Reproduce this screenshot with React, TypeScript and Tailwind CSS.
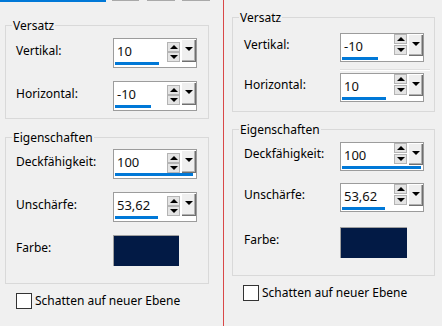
const font = "font-['Noto_Sans',sans-serif]"

interface SpinProps {
  value: string
  bar: number
  tall?: boolean
}

// Windows-style numeric spin box, slider bar runs along the bottom
function Spin({ value, bar, tall = false }: SpinProps) {
  return (
    <div
      className={`flex w-[84px] shrink-0 flex-col border border-[#9c9c9c] bg-white ${tall ? 'h-[30px]' : 'h-[29px]'}`}
    >
      <div className="flex items-start">
        <div className="flex-1 pt-[4px] pl-[3px] text-[13px] leading-[16px] text-[#101010]">{value}</div>
        <div className={`flex w-[13px] flex-col ${tall ? 'pt-[3px]' : 'gap-[1px]'}`}>
          <div className="flex h-[10px] items-center justify-center border border-[#b4b4b4] bg-[#e4e4e4]">
            <div className="h-0 w-0 border-x-[4px] border-b-[4px] border-x-transparent border-b-black" />
          </div>
          <div className="flex h-[10px] items-center justify-center border border-[#b4b4b4] bg-[#e4e4e4]">
            <div className="h-0 w-0 border-x-[4px] border-t-[4px] border-x-transparent border-t-black" />
          </div>
        </div>
        <div
          className={`ml-[1px] flex w-[15px] justify-center bg-[#efefef] pt-[8px] shadow-[inset_1px_1px_0_#ffffff,inset_-1px_-1px_0_#6f6f6f,inset_-2px_-2px_0_#b0b0b0] ${tall ? 'h-[23px]' : 'h-[22px]'}`}
        >
          <div className="h-0 w-0 border-x-[4px] border-t-[4px] border-x-transparent border-t-black" />
        </div>
      </div>
      <div
        className={`mt-auto ml-[1px] h-[3px] bg-[#0078d7] ${tall ? 'mb-[2px]' : 'mb-[1px]'}`}
        style={{ width: bar }}
      />
    </div>
  )
}

function Row({ label, children, labelW }: { label: string; children: React.ReactNode; labelW: string }) {
  return (
    <div className="flex items-center">
      <div className={`${labelW} mb-[5px] shrink-0 whitespace-nowrap text-[12px] leading-[16px] text-black`}>
        {label}
      </div>
      {children}
    </div>
  )
}

function Group({ title, className, children }: { title: string; className: string; children: React.ReactNode }) {
  return (
    <div className={`relative border border-[#d9d9d9] ${className}`}>
      <span className="absolute left-[6px] top-[-8px] bg-[#f0f0f0] px-[1px] text-[12px] leading-[16px] text-black">
        {title}
      </span>
      {children}
    </div>
  )
}

function Checkbox() {
  return (
    <div className="flex items-center gap-[3px]">
      <div className="h-[16px] w-[16px] border border-[#333333] bg-white" />
      <span className="text-[12px] leading-[16px] text-black">Schatten auf neuer Ebene</span>
    </div>
  )
}

function Swatch({ w }: { w: string }) {
  return <div className={`h-[31px] ${w} border-l border-t border-[#a0a0a0] bg-[#021a45]`} />
}

function LeftPanel() {
  return (
    <div className="flex w-[223px] shrink-0 flex-col">
      <div className="flex h-[2px] items-start">
        <div className="h-[2px] w-[106px] bg-[#0078d7]" />
        <div className="ml-[6px] h-[1px] w-[27px] bg-[#a9a9a9]" />
        <div className="ml-[8px] h-[1px] w-[28px] bg-[#a9a9a9]" />
        <div className="ml-[7px] h-[1px] w-[28px] bg-[#a9a9a9]" />
      </div>

      <Group title="Versatz" className="ml-[5px] mt-[23px] w-[204px] pt-[12px] pl-[10px] pb-[7px]">
        <div className="flex flex-col gap-[13px]">
          <Row label="Vertikal:" labelW="w-[97px]">
            <Spin value="10" bar={44} tall />
          </Row>
          <Row label="Horizontal:" labelW="w-[97px]">
            <Spin value="-10" bar={36} tall />
          </Row>
        </div>
      </Group>

      <Group title="Eigenschaften" className="ml-[5px] mt-[18px] w-[204px] pt-[11px] pl-[10px] pb-[17px]">
        <div className="flex flex-col gap-[13px]">
          <Row label="Deckfähigkeit:" labelW="w-[97px]">
            <Spin value="100" bar={78} tall />
          </Row>
          <Row label="Unschärfe:" labelW="w-[97px]">
            <Spin value="53,62" bar={43} tall />
          </Row>
          <Row label="Farbe:" labelW="w-[97px]">
            <Swatch w="w-[66px]" />
          </Row>
        </div>
      </Group>

      <div className="ml-[16px] mt-[9px]">
        <Checkbox />
      </div>
    </div>
  )
}

function RightPanel() {
  return (
    <div className="flex w-[218px] shrink-0 flex-col">
      <Group title="Versatz" className="ml-[8px] mt-[17px] w-[203px] pt-[15px] pl-[11px] pb-[9px]">
        <div className="flex flex-col">
          <Row label="Vertikal:" labelW="w-[96px]">
            <Spin value="-10" bar={36} />
          </Row>
          <div className="ml-[96px] mt-[7px] h-[2px] w-[90px] border-t border-b border-t-[#e0e0e0] border-b-white" />
          <div className="mt-[2px]">
            <Row label="Horizontal:" labelW="w-[96px]">
              <Spin value="10" bar={44} />
            </Row>
          </div>
        </div>
      </Group>

      <Group title="Eigenschaften" className="ml-[8px] mt-[17px] w-[203px] pt-[12px] pl-[11px] pb-[17px]">
        <div className="flex flex-col">
          <Row label="Deckfähigkeit:" labelW="w-[96px]">
            <Spin value="100" bar={79} />
          </Row>
          <div className="mt-[12px]">
            <Row label="Unschärfe:" labelW="w-[96px]">
              <Spin value="53,62" bar={43} />
            </Row>
          </div>
          <div className="mt-[15px]">
            <Row label="Farbe:" labelW="w-[96px]">
              <Swatch w="w-[67px]" />
            </Row>
          </div>
        </div>
      </Group>

      <div className="ml-[19px] mt-[9px]">
        <Checkbox />
      </div>
    </div>
  )
}

export default function App() {
  return (
    <div className={`${font} flex h-[326px] w-[442px] overflow-hidden bg-[#f0f0f0]`}>
      <LeftPanel />
      <div className="w-px shrink-0 bg-[#d94848]" />
      <RightPanel />
    </div>
  )
}
